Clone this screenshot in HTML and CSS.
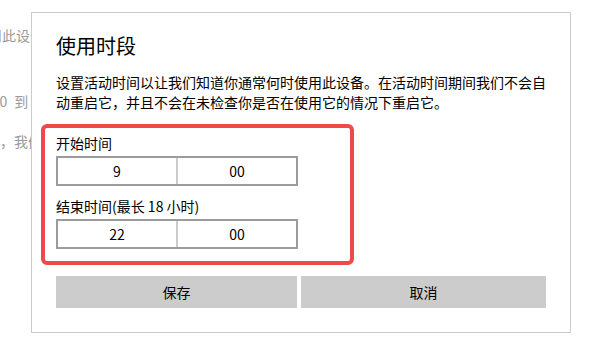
FILE: index.html
```html
<!DOCTYPE html>
<html lang="zh-CN">
<head>
<meta charset="utf-8">
<title>使用时段</title>
<link rel="stylesheet" href="styles.css">
</head>
<body>
<div class="page">
  <div class="bg">
    <div class="bg-line l1">在不使用此设备时，我们会自动重启</div>
    <div class="bg-line l2">8:00 到 17:00</div>
    <div class="bg-line l3">在活动时间，我们不会自动重启你的设备</div>
  </div>

  <div class="dialog">
    <h1 class="title">使用时段</h1>
    <p class="desc">设置活动时间以让我们知道你通常何时使用此设备。在活动时间期间我们不会自动重启它，并且不会在未检查你是否在使用它的情况下重启它。</p>

    <div class="highlight">
      <div class="label">开始时间</div>
      <div class="time-input">
        <span class="cell">9</span>
        <span class="cell sep">00</span>
      </div>
      <div class="label label-gap">结束时间(最长 18 小时)</div>
      <div class="time-input">
        <span class="cell">22</span>
        <span class="cell sep">00</span>
      </div>
    </div>

    <div class="actions">
      <button class="btn">保存</button>
      <button class="btn">取消</button>
    </div>
  </div>
</div>
</body>
</html>
```

FILE: styles.css
```css
* { box-sizing: border-box; }

html, body {
  margin: 0;
  padding: 0;
  background: #ffffff;
}

body {
  font-family: "Noto Sans", "Noto Sans CJK SC", sans-serif;
  color: #000;
}

.page {
  position: relative;
  width: 600px;
  height: 350px;
  overflow: hidden;
}

.bg {
  padding-top: 25px;
  font-family: "Noto Sans CJK SC", sans-serif;
  font-size: 14px;
  line-height: 20px;
  color: #9a9a9a;
  white-space: nowrap;
}

.bg-line.l1 { margin-left: -54px; }
.bg-line.l2 { margin-left: -20px; margin-top: 46px; word-spacing: 4px; }
.bg-line.l3 { margin-left: -70px; margin-top: 20px; }

.dialog {
  position: absolute;
  left: 31px;
  top: 12px;
  width: 540px;
  height: 321px;
  background: #ffffff;
  border: 1px solid #cccccc;
  padding: 19px 24px 0 24px;
}

.title {
  margin: 0;
  font-family: "Noto Sans CJK SC", sans-serif;
  font-size: 20px;
  line-height: 28px;
  font-weight: normal;
  color: #000;
}

.desc {
  margin: 12px 0 0 0;
  width: 490px;
  font-family: "Noto Sans CJK SC", sans-serif;
  font-size: 14px;
  line-height: 20px;
  color: #000;
}

.highlight {
  margin: 12px 0 0 -15px;
  width: 313px;
  border: 4px solid #ef4a4a;
  border-radius: 6px;
  padding: 5px 0 12px 11px;
}

.label {
  font-family: "Noto Sans CJK SC", sans-serif;
  font-size: 14px;
  line-height: 20px;
}

.label-gap { margin-top: 10px; }

.time-input {
  margin-top: 3px;
  display: flex;
  width: 242px;
  height: 30px;
  border: 2px solid #9c9c9c;
}

.cell {
  flex: 1;
  display: flex;
  align-items: center;
  justify-content: center;
  font-family: "Noto Sans CJK SC", sans-serif;
  font-size: 14px;
}

.cell.sep {
  border-left: 2px solid #cccccc;
}

.actions {
  margin-top: 11px;
  display: grid;
  grid-template-columns: 241px 245px;
  gap: 4px;
}

.btn {
  height: 32px;
  border: none;
  background: #cccccc;
  font-family: "Noto Sans CJK SC", sans-serif;
  font-size: 14px;
  color: #000;
  padding: 0;
}
```
